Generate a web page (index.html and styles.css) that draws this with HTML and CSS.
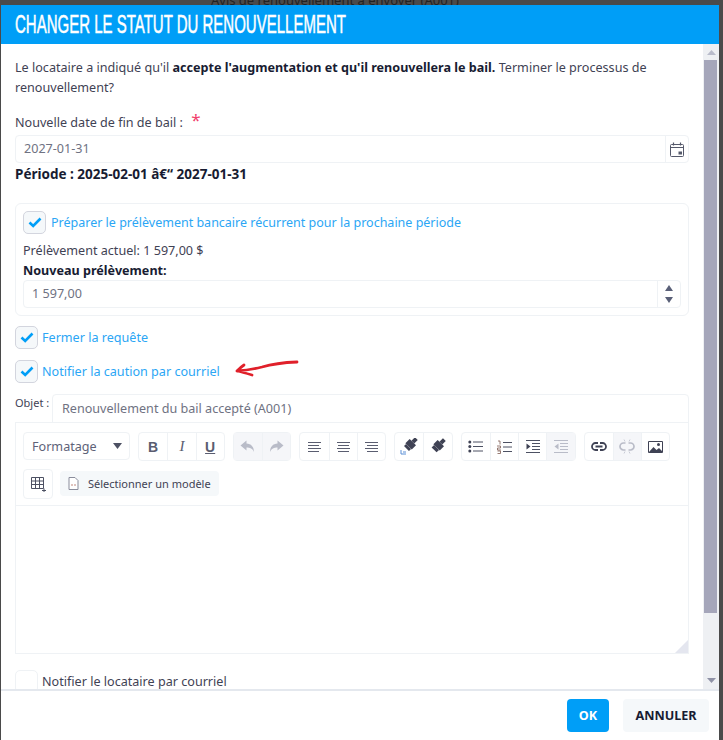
FILE: index.html
```html
<!DOCTYPE html>
<html lang="fr">
<head>
<meta charset="utf-8">
<title>Changer le statut du renouvellement</title>
<link rel="stylesheet" href="styles.css">
</head>
<body>
<div class="behind">Avis de renouvellement à envoyer (A001)</div>
<div class="modal">
  <header class="modal-head"><h1 class="title">CHANGER LE STATUT DU RENOUVELLEMENT</h1></header>
  <div class="modal-middle">
    <div class="scroll-content">
      <p class="intro">Le locataire a indiqué qu'il <b>accepte l'augmentation et qu'il renouvellera le bail.</b> Terminer le processus de renouvellement?</p>
      <div class="date-label">Nouvelle date de fin de bail : <span class="req">*</span></div>
      <div class="input-row">
        <div class="input-val">2027-01-31</div>
        <div class="addon">
          <svg width="14" height="15" viewBox="0 0 14 15"><rect x=".5" y="2.500" width="13" height="12" rx="1" fill="none" stroke="#55596b"/><path d="M.5 5.500h13" stroke="#55596b"/><path d="M3.500 .5v3M10.500 .5v3" stroke="#55596b" stroke-width="1.200"/><path d="M8.500 9.500h3.500v3H8.500z" fill="#55596b"/></svg>
        </div>
      </div>
      <div class="period">Période : 2025-02-01 â€“ 2027-01-31</div>

      <section class="card">
        <label class="check-row"><span class="box"><svg width="14" height="11" viewBox="0 0 14 11"><path d="M1.500 5.500l3.700 3.500L12.500 1.500" fill="none" stroke="#009ef7" stroke-width="2.600"/></svg></span><span class="check-text on">Préparer le prélèvement bancaire récurrent pour la prochaine période</span></label>
        <div class="current">Prélèvement actuel: 1 597,00 $</div>
        <div class="new-label">Nouveau prélèvement:</div>
        <div class="input-row amount">
          <div class="input-val">1 597,00</div>
          <div class="addon spin">
            <svg width="8" height="6" viewBox="0 0 8 6"><path d="M4 0l4 6H0z" fill="#5a6078"/></svg>
            <svg width="8" height="6" viewBox="0 0 8 6"><path d="M4 6l4-6H0z" fill="#5a6078"/></svg>
          </div>
        </div>
      </section>

      <label class="check-row standalone first"><span class="box"><svg width="14" height="11" viewBox="0 0 14 11"><path d="M1.500 5.500l3.700 3.500L12.500 1.500" fill="none" stroke="#009ef7" stroke-width="2.600"/></svg></span><span class="check-text on">Fermer la requête</span></label>
      <label class="check-row standalone second"><span class="box"><svg width="14" height="11" viewBox="0 0 14 11"><path d="M1.500 5.500l3.700 3.500L12.500 1.500" fill="none" stroke="#009ef7" stroke-width="2.600"/></svg></span><span class="check-text on">Notifier la caution par courriel</span></label>

      <div class="subject">
        <span class="subject-label">Objet :</span>
        <div class="subject-input">Renouvellement du bail accepté (A001)</div>
      </div>

      <div class="editor">
        <div class="toolbar">
          <div class="select">Formatage<svg width="9" height="6" viewBox="0 0 9 6"><path d="M0 0h9L4.500 6z" fill="#4d5163"/></svg></div>
          <div class="group">
            <span class="tb letter b">B</span><span class="tb letter i">I</span><span class="tb letter u">U</span>
          </div>
          <div class="group">
            <span class="tb off"><svg width="15" height="13" viewBox="0 0 15 13"><path d="M6.500.5L.5 5.500l6 5V7.500c3.500 0 6 1 7.500 4.500C14 7 11 3.500 6.500 3.500z" fill="#b9bcc8"/></svg></span>
            <span class="tb off"><svg width="15" height="13" viewBox="0 0 15 13"><path d="M8.500.5l6 5-6 5V7.500c-3.500 0-6 1-7.500 4.500C1 7 4 3.500 8.500 3.500z" fill="#b9bcc8"/></svg></span>
          </div>
          <div class="group">
            <span class="tb"><svg width="13" height="12" viewBox="0 0 13 12"><path d="M0 1.500h13M0 4.500h11M0 7.500h13M0 10.500h11" stroke="#5a5d70" stroke-width="1.200"/></svg></span>
            <span class="tb"><svg width="13" height="12" viewBox="0 0 13 12"><path d="M0 1.500h13M1 4.500h11M0 7.500h13M1 10.500h11" stroke="#5a5d70" stroke-width="1.200"/></svg></span>
            <span class="tb"><svg width="13" height="12" viewBox="0 0 13 12"><path d="M0 1.500h13M2 4.500h11M0 7.500h13M2 10.500h11" stroke="#5a5d70" stroke-width="1.200"/></svg></span>
          </div>
          <div class="group">
            <span class="tb"><svg width="18" height="17" viewBox="0 0 18 17"><g transform="rotate(45 10 7)" fill="#3f4254"><rect x="8" y="-2" width="4" height="5"/><rect x="5.500" y="3" width="9" height="6"/><rect x="6.500" y="9" width="7" height="3"/></g><path d="M1 12v4h5M3 14h3" stroke="#5b8fd6" fill="none"/></svg></span>
            <span class="tb"><svg width="18" height="17" viewBox="0 0 18 17"><g transform="rotate(45 9 8)" fill="#3f4254"><rect x="7" y="-1" width="4" height="5"/><rect x="4.500" y="4" width="9" height="6"/><rect x="5.500" y="10" width="7" height="3.500"/></g></svg></span>
          </div>
          <div class="group">
            <span class="tb"><svg width="15" height="13" viewBox="0 0 15 13"><circle cx="1.800" cy="2" r="1.500" fill="#3f4254"/><circle cx="1.800" cy="6.500" r="1.500" fill="#3f4254"/><circle cx="1.800" cy="11" r="1.500" fill="#3f4254"/><path d="M5 2h10M5 6.500h10M5 11h10" stroke="#4d5163"/></svg></span>
            <span class="tb"><svg width="15" height="14" viewBox="0 0 15 14"><path d="M1 1h2v3.500M0 6h3.500v2H.5v2H4M.5 11h3v2.500h-3" stroke="#7d5a50" fill="none" stroke-width=".8"/><path d="M6 2.500h9M6 7h9M6 11.500h9" stroke="#4d5163"/></svg></span>
            <span class="tb"><svg width="14" height="13" viewBox="0 0 14 13"><path d="M0 .5h14M6 3.500h8M6 6.500h8M6 9.500h8M0 12.500h14" stroke="#4d5163"/><path d="M.5 3.500l4 3-4 3z" fill="#3f4254"/></svg></span>
            <span class="tb off"><svg width="14" height="13" viewBox="0 0 14 13"><path d="M0 .5h14M6 3.500h8M6 6.500h8M6 9.500h8M0 12.500h14" stroke="#b9bcc8"/><path d="M4.500 3.500l-4 3 4 3z" fill="#b9bcc8"/></svg></span>
          </div>
          <div class="group">
            <span class="tb"><svg width="16" height="9" viewBox="0 0 16 9"><path d="M7 1H4.500a3.500 3.500 0 0 0 0 7H7M9 1h2.500a3.500 3.500 0 0 1 0 7H9M4.500 4.500h7" fill="none" stroke="#3f4254" stroke-width="1.800"/></svg></span>
            <span class="tb off"><svg width="16" height="15" viewBox="0 0 16 15"><path d="M6.500 4H4.500a3.500 3.500 0 0 0 0 7h2M9.500 4h2a3.500 3.500 0 0 1 0 7h-2" fill="none" stroke="#b9bcc8" stroke-width="1.700"/><path d="M5 .5l1 2M11 .5l-1 2M5 14.500l1-2M11 14.500l-1-2" stroke="#c9ccd6"/></svg></span>
            <span class="tb"><svg width="15" height="12" viewBox="0 0 15 12"><path d="M.5.5h14v11H.5z" fill="#fff" stroke="#3f4254"/><path d="M1 11l4.500-5 3 3 2.500-2 3 3v1z" fill="#3f4254"/><circle cx="10.500" cy="3.500" r="1.500" fill="#3f4254"/></svg></span>
          </div>
          <div class="group single">
            <span class="tb wide"><svg width="15" height="15" viewBox="0 0 15 15"><path d="M.5.500h12v11H.5zM.5 4h12M.5 7.500h12M4.500.5v11M8.500.5v11" fill="none" stroke="#4d5163"/><path d="M11 13.500h4M13 11.500v3.500" stroke="#4d5163"/></svg></span>
          </div>
          <div class="template">
            <svg width="11" height="13" viewBox="0 0 11 13"><path d="M1 .5h6l3 3v9H1z" fill="#fff" stroke="#8a8d9c"/><path d="M3.500 8l1-1M3.500 8l1 1M7.500 8l-1-1M7.500 8l-1 1" stroke="#b06a5a" stroke-width=".8"/></svg>
            <span>Sélectionner un modèle</span>
          </div>
        </div>
        <div class="editor-area"><span class="grip"></span></div>
      </div>

      <label class="check-row standalone last"><span class="box empty"></span><span class="check-text">Notifier le locataire par courriel</span></label>
    </div>
    <div class="scrollbar">
      <svg width="9" height="5" viewBox="0 0 9 5" class="sb-arrow-up"><path d="M4.500 0L9 5H0z" fill="#b9bccb"/></svg>
      <div class="sb-thumb"></div>
      <svg width="9" height="5" viewBox="0 0 9 5" class="sb-arrow-down"><path d="M4.500 5L9 0H0z" fill="#8f92a6"/></svg>
    </div>
  </div>
  <footer class="modal-foot">
    <button class="btn ok">OK</button>
    <button class="btn cancel">ANNULER</button>
  </footer>
  <svg class="red-arrow" width="68" height="22" viewBox="0 0 68 22"><path d="M65 4C52 4.500 40 6 30 9 20 11.500 12 12.500 5 13M5 13C7 11 9 9 12 7M5 13C10 14 15 15.500 20 17" fill="none" stroke="#e0202a" stroke-width="2.800" stroke-linecap="round" stroke-linejoin="round"/></svg>
</div>
</body>
</html>
```
FILE: styles.css
```css
* { box-sizing: border-box; }
html, body { margin: 0; height: 100%; }
body {
  background: #4a4a4a;
  overflow: hidden;
  font-family: "Noto Sans", "Open Sans", sans-serif;
  font-size: 12.600px;
  color: #3f4254;
  padding: 5px 4px 0 1px;
  position: relative;
}
.behind { position: absolute; left: 211px; top: -9px; font-size: 13px; color: #222; }
.modal {
  position: relative;
  height: 735px;
  background: #fff;
  display: flex;
  flex-direction: column;
}
.modal-head { height: 39px; background: #009ef7; padding: 0 14px; flex: none; overflow: hidden; }
.title {
  margin: 0;
  font-family: "Liberation Sans", sans-serif;
  font-weight: 400;
  font-size: 25px;
  line-height: 39px;
  color: #fff;
  -webkit-text-stroke: 0.5px #fff;
  white-space: nowrap;
  transform: scaleX(0.6);
  transform-origin: left center;
}
.modal-middle { flex: 1; min-height: 0; display: flex; border-bottom: 2px solid #e4e8ee; }
.scroll-content { flex: 1; min-width: 0; padding: 14px 14px 0; overflow: hidden; }
.intro { margin: 0; line-height: 20px; color: #3f4254; }
.intro b { color: #181c32; }
.date-label { margin-top: 15px; line-height: 20px; height: 22px; }
.req { color: #f1416c; font-size: 17px; line-height: 14px; margin-left: 5px; vertical-align: 1px; }
.input-row { display: flex; height: 28px; border: 1px solid #eff2f5; border-radius: 4px; }
.input-val { flex: 1; padding-left: 8px; line-height: 26px; color: #6f7282; }
.addon { width: 23px; border-left: 1px solid #eff2f5; display: flex; align-items: center; justify-content: center; }
.period { font-weight: 700; font-size: 13.500px; color: #181c32; line-height: 20px; margin-top: 1px; }
.card { margin-top: 19px; height: 113px; border: 1px solid #eff2f5; border-radius: 6px; padding: 7px; }
.card .check-text { font-size: 12.500px; }
.check-row { display: flex; align-items: center; gap: 5px; }
.box {
  width: 23px; height: 23px; flex: none;
  background: #f5f8fa; border: 1px solid #d3d5de; border-radius: 5px;
  display: flex; align-items: center; justify-content: center;
}
.box.empty { background: #fff; border-color: #eff2f5; }
.check-text { line-height: 20px; color: #3f4254; }
.check-text.on { color: #2ba6f5; }
.current { margin-top: 7px; line-height: 20px; color: #3f4254; }
.new-label { font-weight: 700; color: #181c32; line-height: 20px; height: 19px; }
.amount .addon { flex-direction: column; gap: 6px; }
.standalone { margin-top: 11px; gap: 4px; }
.standalone.first { margin-top: 10px; }
.standalone.last { margin-top: 16px; }
.subject { display: flex; margin-top: 11px; height: 29px; }
.subject-label { width: 37px; font-size: 11px; line-height: 18px; color: #3f4254; }
.subject-input { flex: 1; border: 1px solid #eff2f5; border-radius: 4px 4px 0 0; padding-left: 9px; line-height: 27px; color: #6f7282; }
.editor { margin-top: -1px; height: 232px; border: 1px solid #eff2f5; display: flex; flex-direction: column; }
.toolbar { flex: none; height: 83px; border-bottom: 1px solid #eff2f5; padding: 9px 7px 0; display: flex; flex-wrap: wrap; align-items: flex-start; align-content: flex-start; gap: 8px; }
.select { width: 107px; height: 28px; border: 1px solid #eff2f5; border-radius: 4px; display: flex; align-items: center; justify-content: space-between; padding: 0 7px 0 8px; color: #5e6278; }
.group { display: flex; border: 1px solid #eff2f5; border-radius: 4px; height: 29px; }
.tb { width: 28.250px; display: flex; align-items: center; justify-content: center; border-left: 1px solid #eff2f5; }
.tb:first-child { border-left: 0; }
.tb.off { background: #f5f6f9; }
.letter { font-family: "Liberation Sans", sans-serif; font-size: 14px; color: #5a5d70; }
.letter.b { font-weight: 700; }
.letter.i { font-style: italic; font-family: "Liberation Serif", serif; font-size: 15px; }
.letter.u { text-decoration: underline; font-weight: 700; }
.single { height: 30px; }
.tb.wide { width: 28px; }
.template { height: 25px; margin: 2px 0 0 -1px; width: 159px; background: #f5f8fa; border-radius: 4px; display: flex; align-items: center; gap: 9px; padding-left: 8px; font-size: 11px; color: #3f4254; }
.editor-area { flex: 1; position: relative; }
.grip { position: absolute; right: 0; bottom: 0; width: 0; height: 0; border-style: solid; border-width: 0 0 13px 13px; border-color: transparent transparent #e4e6ef transparent; }
.scrollbar { flex: none; width: 16px; background: #eef0f3; display: flex; flex-direction: column; align-items: center; }
.sb-arrow-up { margin-top: 6px; flex: none; }
.sb-thumb { margin-top: 5px; width: 13px; height: 553px; background: #a5a6ba; flex: none; align-self: flex-start; margin-left: 1px; }
.sb-arrow-down { margin-top: auto; margin-bottom: 6px; flex: none; }
.modal-foot { flex: none; height: 49px; display: flex; justify-content: flex-end; align-items: flex-start; gap: 14px; padding: 8px 10px 0; }
.btn { height: 33px; border: 0; border-radius: 4px; font-family: "Noto Sans", sans-serif; font-weight: 700; font-size: 12.600px; }
.ok { width: 42px; background: #009ef7; color: #fff; }
.cancel { width: 86px; background: #f5f8fa; color: #181c32; }
.red-arrow { position: absolute; left: 231px; top: 353px; }
```
